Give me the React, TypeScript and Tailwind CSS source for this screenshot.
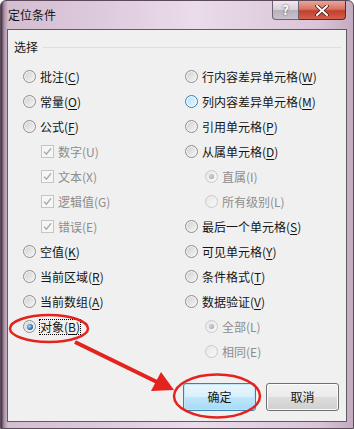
type Row = {
  kind: "radio" | "check" | "sub";
  text: string;
  k: string;
  disabled?: boolean;
  checked?: boolean;
  hover?: boolean;
  focus?: boolean;
};

const LEFT: Row[] = [
  { kind: "radio", text: "批注", k: "C" },
  { kind: "radio", text: "常量", k: "O" },
  { kind: "radio", text: "公式", k: "F" },
  { kind: "check", text: "数字", k: "U", disabled: true, checked: true },
  { kind: "check", text: "文本", k: "X", disabled: true, checked: true },
  { kind: "check", text: "逻辑值", k: "G", disabled: true, checked: true },
  { kind: "check", text: "错误", k: "E", disabled: true, checked: true },
  { kind: "radio", text: "空值", k: "K" },
  { kind: "radio", text: "当前区域", k: "R" },
  { kind: "radio", text: "当前数组", k: "A" },
  { kind: "radio", text: "对象", k: "B", checked: true, focus: true },
];

const RIGHT: Row[] = [
  { kind: "radio", text: "行内容差异单元格", k: "W" },
  { kind: "radio", text: "列内容差异单元格", k: "M", hover: true },
  { kind: "radio", text: "引用单元格", k: "P" },
  { kind: "radio", text: "从属单元格", k: "D" },
  { kind: "sub", text: "直属", k: "I", disabled: true, checked: true },
  { kind: "sub", text: "所有级别", k: "L", disabled: true },
  { kind: "radio", text: "最后一个单元格", k: "S" },
  { kind: "radio", text: "可见单元格", k: "Y" },
  { kind: "radio", text: "条件格式", k: "T" },
  { kind: "radio", text: "数据验证", k: "V" },
  { kind: "sub", text: "全部", k: "L", disabled: true, checked: true },
  { kind: "sub", text: "相同", k: "E", disabled: true },
];

function Radio({ row }: { row: Row }) {
  if (row.disabled) {
    return (
      <span className="flex h-[13px] w-[13px] shrink-0 items-center justify-center rounded-full border border-[#c9c9c9] bg-[linear-gradient(135deg,#e6e6e6,#f8f8f8)]">
        {row.checked && (
          <span className="h-[5px] w-[5px] rounded-full bg-[radial-gradient(circle_at_40%_40%,#d8d8d8,#9a9a9a)]" />
        )}
      </span>
    );
  }
  if (row.hover) {
    return (
      <span className="flex h-[13px] w-[13px] shrink-0 items-center justify-center rounded-full border border-[#3c7fb1] bg-[linear-gradient(135deg,#b8e0f8,#e6f5fd)] shadow-[inset_0_0_0_1px_#ffffff]" />
    );
  }
  return (
    <span className="flex h-[13px] w-[13px] shrink-0 items-center justify-center rounded-full border border-[#8f8f8f] bg-[linear-gradient(135deg,#cfcfcf,#f7f7f7)] shadow-[inset_0_0_0_1px_#f4f4f4]">
      {row.checked && (
        <span className="h-[6px] w-[6px] rounded-full bg-[radial-gradient(circle_at_38%_38%,#a9dcfb,#2b6cab_60%,#173f6d)]" />
      )}
    </span>
  );
}

function Check() {
  return (
    <span className="flex h-[13px] w-[13px] shrink-0 items-center justify-center border border-[#c5c5c5] bg-[#f6f6f6]">
      <svg width="11" height="11" viewBox="0 0 11 11">
        <path d="M2 5.6 L4.4 8.2 L9 2.4" fill="none" stroke="#a8a8a8" strokeWidth="1.4" />
      </svg>
    </span>
  );
}

function Item({ row }: { row: Row }) {
  const indent = row.kind === "check" ? "pl-[18px]" : row.kind === "sub" ? "pl-[20px]" : "";
  const color = row.disabled ? "text-[#8d8d8d]" : "text-[#151515]";
  return (
    <div className={`flex h-[25px] items-center gap-[4px] ${indent}`}>
      {row.kind === "check" ? <Check /> : <Radio row={row} />}
      <span
        className={`whitespace-nowrap text-[12px] leading-[14px] ${color} ${
          row.focus ? "outline-1 outline-dotted outline-black" : ""
        }`}
      >
        {row.text}(
        {row.disabled ? row.k : <span className="underline underline-offset-2">{row.k}</span>})
      </span>
    </div>
  );
}

function Button({ label, primary }: { label: string; primary?: boolean }) {
  return (
    <div
      className={`flex h-[28px] w-[73px] items-center justify-center rounded-[3px] border text-[12px] text-[#151515] ${
        primary
          ? "border-[#3c7fb1] bg-[linear-gradient(180deg,#eaf6fd_0%,#d9f0fc_48%,#bee6fd_52%,#a7d9f5_100%)] shadow-[inset_0_0_0_1px_#c4e5f6]"
          : "border-[#707070] bg-[linear-gradient(180deg,#f2f2f2_0%,#ebebeb_48%,#dddddd_52%,#cfcfcf_100%)] shadow-[inset_0_0_0_1px_#fbfbfb]"
      }`}
    >
      {label}
    </div>
  );
}

export default function App() {
  return (
    <div className="relative flex h-[429px] w-[354px] flex-col overflow-hidden rounded-t-[6px] border border-[#5a4a5a] bg-[linear-gradient(90deg,#3a2a38_0px,#a88ea4_3px,#d3bdd1_7px,#dfcbde_30%,#eadcea_55%,#dac5d8_90%,#c3aac0_100%)] font-['Noto_Sans_CJK_SC',sans-serif]">
      {/* title bar */}
      <div className="flex h-[28px] shrink-0 items-start">
        <div className="flex h-full flex-1 items-center pl-[7px] text-[12px] text-[#111]">定位条件</div>
        <div className="mr-[7px] flex h-[19px]">
          <div className="flex w-[27px] items-center justify-center rounded-bl-[4px] border border-t-0 border-[#6d6272] bg-[linear-gradient(180deg,#eee8ef_0%,#d6cfd8_50%,#b9b0bc_52%,#c9c2cc_100%)] text-[13px] font-bold text-white [text-shadow:0_0_2px_#3b3340]">
            ?
          </div>
          <div className="flex w-[47px] items-center justify-center rounded-br-[4px] border border-l-0 border-t-0 border-[#5e2a24] bg-[linear-gradient(180deg,#e9a597_0%,#d77462_45%,#c2402c_55%,#d5604b_100%)]">
            <svg width="14" height="11" viewBox="0 0 14 11">
              <path d="M2 1 L12 10 M12 1 L2 10" stroke="#4a1a14" strokeWidth="3.6" strokeLinecap="round" />
              <path d="M2 1 L12 10 M12 1 L2 10" stroke="#ffffff" strokeWidth="2" strokeLinecap="round" />
            </svg>
          </div>
        </div>
      </div>

      {/* client area */}
      <div className="mx-[6px] flex h-[393px] flex-col border border-[#5d5d5d] bg-[#f0f0f0]">
        <div className="mt-[7px] flex h-[20px] items-center pl-[6px] pr-[5px]">
          <span className="text-[12px] text-[#151515]">选择</span>
          <div className="ml-[5px] h-px flex-1 bg-[#d5dfe5]" />
        </div>

        <div className="mt-[7px] flex pl-[15px]">
          <div className="w-[162px]">
            {LEFT.map((r) => (
              <Item key={r.text} row={r} />
            ))}
          </div>
          <div className="flex-1">
            {RIGHT.map((r) => (
              <Item key={r.text} row={r} />
            ))}
          </div>
        </div>

        <div className="mt-auto mb-[10px] flex justify-end gap-[10px] pr-[7px]">
          <Button label="确定" primary />
          <Button label="取消" />
        </div>
      </div>

      {/* annotations drawn over the dialog */}
      <svg className="pointer-events-none absolute left-0 top-0" width="354" height="429" viewBox="0 0 354 429">
        <ellipse cx="48" cy="327.5" rx="39" ry="13.5" fill="none" stroke="#e3231e" strokeWidth="2.5" />
        <ellipse cx="216" cy="395" rx="43" ry="21.5" fill="none" stroke="#e3231e" strokeWidth="2.5" />
        <line x1="74" y1="341" x2="158" y2="382" stroke="#e3231e" strokeWidth="4" />
        <polygon points="173,389 150,390 160,371" fill="#e3231e" />
      </svg>
    </div>
  );
}
